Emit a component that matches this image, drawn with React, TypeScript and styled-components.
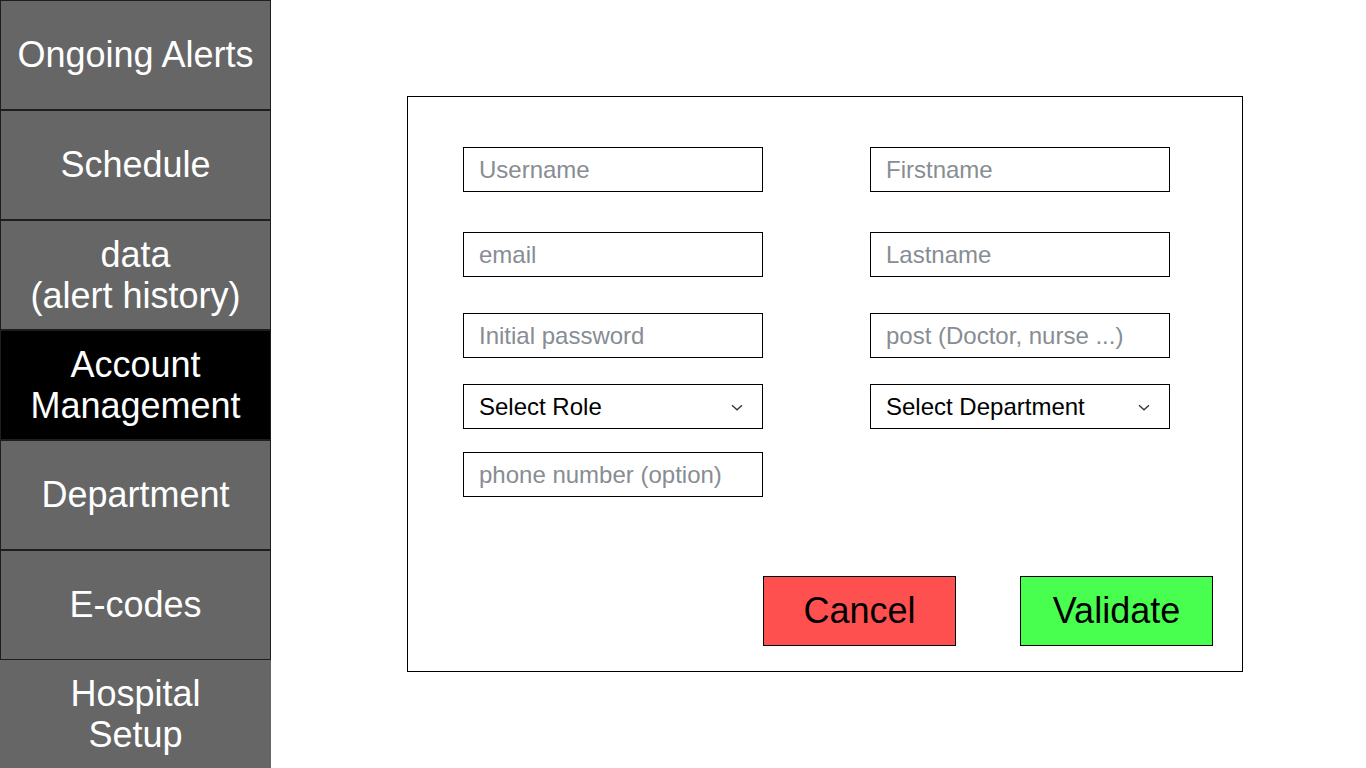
import styled, { createGlobalStyle } from 'styled-components';

const GlobalStyle = createGlobalStyle`
  html, body {
    margin: 0;
    padding: 0;
    background: #fff;
    font-family: "Liberation Sans", Arial, sans-serif;
  }
  * {
    box-sizing: border-box;
  }
`

const menu = [
  { label: 'Ongoing Alerts' },
  { label: 'Schedule' },
  { label: 'data\n(alert history)' },
  { label: 'Account\nManagement', active: true },
  { label: 'Department' },
  { label: 'E-codes' },
  { label: 'Hospital\nSetup', last: true },
];

const App = () => {
  return (
    <>
      <GlobalStyle />
      <Page>
        <Sidebar>
          {menu.map((item) => (
            <NavItem key={item.label} $active={item.active} $last={item.last}>
              {item.label}
            </NavItem>
          ))}
        </Sidebar>
        <Main>
          <Panel>
            <Row $top={0}>
              <Field placeholder="Username" />
              <Field placeholder="Firstname" />
            </Row>
            <Row $top={40}>
              <Field placeholder="email" />
              <Field placeholder="Lastname" />
            </Row>
            <Row $top={36}>
              <Field placeholder="Initial password" type="text" />
              <Field placeholder="post (Doctor, nurse ...)" />
            </Row>
            <Row $top={26}>
              <SelectBox>
                Select Role
                <Chevron />
              </SelectBox>
              <SelectBox>
                Select Department
                <Chevron />
              </SelectBox>
            </Row>
            <Row $top={23}>
              <Field placeholder="phone number (option)" />
            </Row>
            <Actions>
              <ActionButton $color="#ff5050">Cancel</ActionButton>
              <ActionButton $color="#48ff50">Validate</ActionButton>
            </Actions>
          </Panel>
        </Main>
      </Page>
    </>
  )
}

const Chevron = () => (
  <ChevronIcon width="12" height="8" viewBox="0 0 12 8">
    <path d="M1 1.5 L6 6 L11 1.5" fill="none" stroke="#333" strokeWidth="1.3" />
  </ChevronIcon>
)

const Page = styled.div`
  display: flex;
  width: 100%;
  height: 768px;
  overflow: hidden;
`

const Sidebar = styled.nav`
  display: flex;
  flex-direction: column;
  width: 271px;
  height: 100%;
  flex-shrink: 0;
`

const NavItem = styled.div<{ $active?: boolean; $last?: boolean }>`
  flex: 1;
  display: flex;
  align-items: center;
  justify-content: center;
  text-align: center;
  white-space: pre-line;
  background: ${(p) => (p.$active ? '#000' : '#666')};
  border: ${(p) => (p.$last ? 'none' : '1px solid #1e1e1e')};
  color: #fff;
  font-size: 36px;
  line-height: 1.15;
`

const Main = styled.main`
  flex: 1;
  padding: 96px 0 0 136px;
`

const Panel = styled.section`
  display: flex;
  flex-direction: column;
  width: 836px;
  height: 576px;
  border: 1px solid #000;
  padding: 50px 29px 25px 55px;
`

const Row = styled.div<{ $top: number }>`
  display: grid;
  grid-template-columns: 300px 300px;
  column-gap: 107px;
  margin-top: ${(p) => p.$top}px;
`

const Field = styled.input`
  height: 45px;
  border: 1px solid #000;
  border-radius: 0;
  padding: 0 15px;
  font-family: "Liberation Sans", Arial, sans-serif;
  font-size: 24px;
  color: #000;
  outline: none;
  &::placeholder {
    color: #878d93;
  }
`

const SelectBox = styled.div`
  position: relative;
  display: flex;
  align-items: center;
  height: 45px;
  border: 1px solid #000;
  padding: 0 15px;
  font-size: 24px;
  color: #000;
`

const ChevronIcon = styled.svg`
  position: absolute;
  right: 19px;
  top: 50%;
  transform: translateY(-40%);
`

const Actions = styled.div`
  display: flex;
  justify-content: flex-end;
  gap: 64px;
  margin-top: auto;
`

const ActionButton = styled.button<{ $color: string }>`
  width: 193px;
  height: 70px;
  background: ${(p) => p.$color};
  border: 1px solid #000;
  border-radius: 0;
  font-family: "Liberation Sans", Arial, sans-serif;
  font-size: 36px;
  color: #000;
  cursor: pointer;
  padding: 0;
`

export default App;
